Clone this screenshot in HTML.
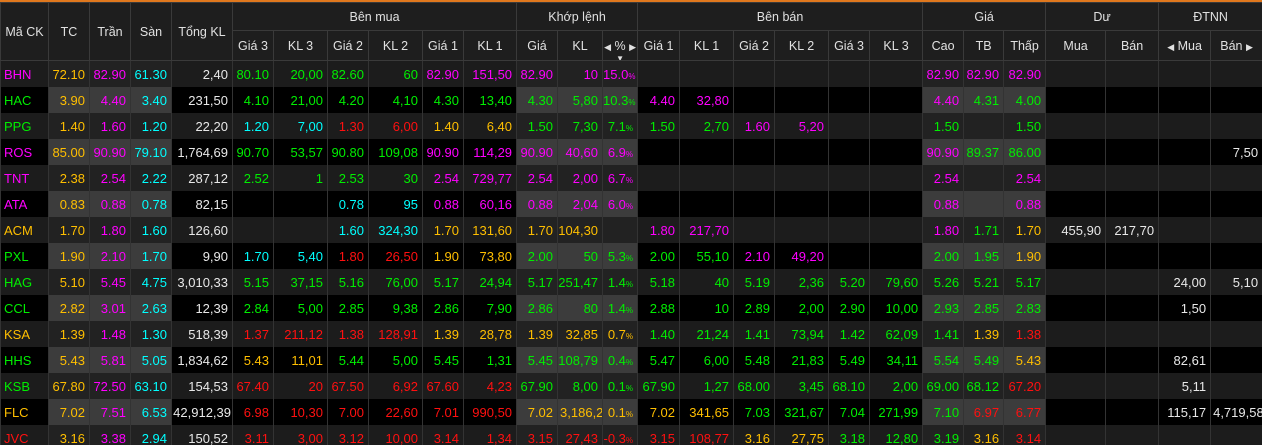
<!DOCTYPE html>
<html><head><meta charset="utf-8">
<style>
html,body{margin:0;padding:0;background:#1c1c1c;width:1262px;height:445px;overflow:hidden}
body{border-top:2px solid #e0781e;box-sizing:border-box;font-family:"Liberation Sans",Arial,sans-serif}
table{border-collapse:collapse;table-layout:fixed;width:1262px}
td,th{padding:0;white-space:nowrap;overflow:hidden;font-weight:normal}
th{color:#e0e0e0;font-size:12.5px;background:#1e1e1e;border:1px solid #3a3a3a;text-align:center}
tr.h1 th{height:27px}
tr.h2 th{height:29px}
td{height:26px;font-size:13px;text-align:right;padding-right:4px;border-left:1px solid #333;border-right:1px solid #333}
tr.o td{background:#1c1c1c}
tr.e td{background:#000}
tr.e td.k{background:#3c3c3c}
tr.o td.k{background:#222}
td.s{text-align:left;padding-left:3px;padding-right:0}
.m{color:#ff00ff}.y{color:#ffbf00}.c{color:#00ffff}.g{color:#00ee00}.r{color:#ff1010}.w{color:#e8e8e8}
small{font-size:8px}
.ar{font-size:9px}
.pc{position:relative}
.pc i{position:absolute;left:0;right:0;bottom:-3px;font-style:normal;font-size:8px;line-height:8px}
</style></head><body>
<table>
<colgroup>
<col style="width:48px"><col style="width:41px"><col style="width:41px"><col style="width:41px"><col style="width:61px">
<col style="width:41px"><col style="width:54px"><col style="width:41px"><col style="width:54px"><col style="width:41px"><col style="width:53px">
<col style="width:41px"><col style="width:45px"><col style="width:35px">
<col style="width:42px"><col style="width:54px"><col style="width:41px"><col style="width:54px"><col style="width:41px"><col style="width:53px">
<col style="width:41px"><col style="width:40px"><col style="width:42px">
<col style="width:60px"><col style="width:53px"><col style="width:52px"><col style="width:52px">
</colgroup>
<tr class="h1"><th rowspan="2">Mã CK</th><th rowspan="2">TC</th><th rowspan="2">Trần</th><th rowspan="2">Sàn</th><th rowspan="2">Tổng KL</th>
<th colspan="6">Bên mua</th><th colspan="3">Khớp lệnh</th><th colspan="6">Bên bán</th><th colspan="3">Giá</th><th colspan="2">Dư</th><th colspan="2">ĐTNN</th></tr>
<tr class="h2"><th>Giá 3</th><th>KL 3</th><th>Giá 2</th><th>KL 2</th><th>Giá 1</th><th>KL 1</th><th>Giá</th><th>KL</th><th class="pc"><span class="ar">◀</span> % <span class="ar">▶</span><i>▼</i></th>
<th>Giá 1</th><th>KL 1</th><th>Giá 2</th><th>KL 2</th><th>Giá 3</th><th>KL 3</th><th>Cao</th><th>TB</th><th>Thấp</th><th>Mua</th><th>Bán</th><th><span class="ar">◀</span> Mua</th><th>Bán <span class="ar">▶</span></th></tr>

<tr class="o"><td class="s m">BHN</td><td class="k y">72.10</td><td class="k m">82.90</td><td class="k c">61.30</td><td class="w">2,40</td><td class="g">80.10</td><td class="g">20,00</td><td class="g">82.60</td><td class="g">60</td><td class="m">82.90</td><td class="m">151,50</td><td class="k m">82.90</td><td class="k m">10</td><td class="k m">15.0<small>%</small></td><td></td><td></td><td></td><td></td><td></td><td></td><td class="k m">82.90</td><td class="k m">82.90</td><td class="k m">82.90</td><td></td><td></td><td></td><td></td></tr>
<tr class="e"><td class="s g">HAC</td><td class="k y">3.90</td><td class="k m">4.40</td><td class="k c">3.40</td><td class="w">231,50</td><td class="g">4.10</td><td class="g">21,00</td><td class="g">4.20</td><td class="g">4,10</td><td class="g">4.30</td><td class="g">13,40</td><td class="k g">4.30</td><td class="k g">5,80</td><td class="k g">10.3<small>%</small></td><td class="m">4.40</td><td class="m">32,80</td><td></td><td></td><td></td><td></td><td class="k m">4.40</td><td class="k g">4.31</td><td class="k g">4.00</td><td></td><td></td><td></td><td></td></tr>
<tr class="o"><td class="s g">PPG</td><td class="k y">1.40</td><td class="k m">1.60</td><td class="k c">1.20</td><td class="w">22,20</td><td class="c">1.20</td><td class="c">7,00</td><td class="r">1.30</td><td class="r">6,00</td><td class="y">1.40</td><td class="y">6,40</td><td class="k g">1.50</td><td class="k g">7,30</td><td class="k g">7.1<small>%</small></td><td class="g">1.50</td><td class="g">2,70</td><td class="m">1.60</td><td class="m">5,20</td><td></td><td></td><td class="k g">1.50</td><td class="k"></td><td class="k g">1.50</td><td></td><td></td><td></td><td></td></tr>
<tr class="e"><td class="s m">ROS</td><td class="k y">85.00</td><td class="k m">90.90</td><td class="k c">79.10</td><td class="w">1,764,69</td><td class="g">90.70</td><td class="g">53,57</td><td class="g">90.80</td><td class="g">109,08</td><td class="m">90.90</td><td class="m">114,29</td><td class="k m">90.90</td><td class="k m">40,60</td><td class="k m">6.9<small>%</small></td><td></td><td></td><td></td><td></td><td></td><td></td><td class="k m">90.90</td><td class="k g">89.37</td><td class="k g">86.00</td><td></td><td></td><td></td><td class="w">7,50</td></tr>
<tr class="o"><td class="s m">TNT</td><td class="k y">2.38</td><td class="k m">2.54</td><td class="k c">2.22</td><td class="w">287,12</td><td class="g">2.52</td><td class="g">1</td><td class="g">2.53</td><td class="g">30</td><td class="m">2.54</td><td class="m">729,77</td><td class="k m">2.54</td><td class="k m">2,00</td><td class="k m">6.7<small>%</small></td><td></td><td></td><td></td><td></td><td></td><td></td><td class="k m">2.54</td><td class="k"></td><td class="k m">2.54</td><td></td><td></td><td></td><td></td></tr>
<tr class="e"><td class="s m">ATA</td><td class="k y">0.83</td><td class="k m">0.88</td><td class="k c">0.78</td><td class="w">82,15</td><td></td><td></td><td class="c">0.78</td><td class="c">95</td><td class="m">0.88</td><td class="m">60,16</td><td class="k m">0.88</td><td class="k m">2,04</td><td class="k m">6.0<small>%</small></td><td></td><td></td><td></td><td></td><td></td><td></td><td class="k m">0.88</td><td class="k"></td><td class="k m">0.88</td><td></td><td></td><td></td><td></td></tr>
<tr class="o"><td class="s y">ACM</td><td class="k y">1.70</td><td class="k m">1.80</td><td class="k c">1.60</td><td class="w">126,60</td><td></td><td></td><td class="c">1.60</td><td class="c">324,30</td><td class="y">1.70</td><td class="y">131,60</td><td class="k y">1.70</td><td class="k y">104,30</td><td class="k"></td><td class="m">1.80</td><td class="m">217,70</td><td></td><td></td><td></td><td></td><td class="k m">1.80</td><td class="k g">1.71</td><td class="k y">1.70</td><td class="w">455,90</td><td class="w">217,70</td><td></td><td></td></tr>
<tr class="e"><td class="s g">PXL</td><td class="k y">1.90</td><td class="k m">2.10</td><td class="k c">1.70</td><td class="w">9,90</td><td class="c">1.70</td><td class="c">5,40</td><td class="r">1.80</td><td class="r">26,50</td><td class="y">1.90</td><td class="y">73,80</td><td class="k g">2.00</td><td class="k g">50</td><td class="k g">5.3<small>%</small></td><td class="g">2.00</td><td class="g">55,10</td><td class="m">2.10</td><td class="m">49,20</td><td></td><td></td><td class="k g">2.00</td><td class="k g">1.95</td><td class="k y">1.90</td><td></td><td></td><td></td><td></td></tr>
<tr class="o"><td class="s g">HAG</td><td class="k y">5.10</td><td class="k m">5.45</td><td class="k c">4.75</td><td class="w">3,010,33</td><td class="g">5.15</td><td class="g">37,15</td><td class="g">5.16</td><td class="g">76,00</td><td class="g">5.17</td><td class="g">24,94</td><td class="k g">5.17</td><td class="k g">251,47</td><td class="k g">1.4<small>%</small></td><td class="g">5.18</td><td class="g">40</td><td class="g">5.19</td><td class="g">2,36</td><td class="g">5.20</td><td class="g">79,60</td><td class="k g">5.26</td><td class="k g">5.21</td><td class="k g">5.17</td><td></td><td></td><td class="w">24,00</td><td class="w">5,10</td></tr>
<tr class="e"><td class="s g">CCL</td><td class="k y">2.82</td><td class="k m">3.01</td><td class="k c">2.63</td><td class="w">12,39</td><td class="g">2.84</td><td class="g">5,00</td><td class="g">2.85</td><td class="g">9,38</td><td class="g">2.86</td><td class="g">7,90</td><td class="k g">2.86</td><td class="k g">80</td><td class="k g">1.4<small>%</small></td><td class="g">2.88</td><td class="g">10</td><td class="g">2.89</td><td class="g">2,00</td><td class="g">2.90</td><td class="g">10,00</td><td class="k g">2.93</td><td class="k g">2.85</td><td class="k g">2.83</td><td></td><td></td><td class="w">1,50</td><td></td></tr>
<tr class="o"><td class="s y">KSA</td><td class="k y">1.39</td><td class="k m">1.48</td><td class="k c">1.30</td><td class="w">518,39</td><td class="r">1.37</td><td class="r">211,12</td><td class="r">1.38</td><td class="r">128,91</td><td class="y">1.39</td><td class="y">28,78</td><td class="k y">1.39</td><td class="k y">32,85</td><td class="k y">0.7<small>%</small></td><td class="g">1.40</td><td class="g">21,24</td><td class="g">1.41</td><td class="g">73,94</td><td class="g">1.42</td><td class="g">62,09</td><td class="k g">1.41</td><td class="k y">1.39</td><td class="k r">1.38</td><td></td><td></td><td></td><td></td></tr>
<tr class="e"><td class="s g">HHS</td><td class="k y">5.43</td><td class="k m">5.81</td><td class="k c">5.05</td><td class="w">1,834,62</td><td class="y">5.43</td><td class="y">11,01</td><td class="g">5.44</td><td class="g">5,00</td><td class="g">5.45</td><td class="g">1,31</td><td class="k g">5.45</td><td class="k g">108,79</td><td class="k g">0.4<small>%</small></td><td class="g">5.47</td><td class="g">6,00</td><td class="g">5.48</td><td class="g">21,83</td><td class="g">5.49</td><td class="g">34,11</td><td class="k g">5.54</td><td class="k g">5.49</td><td class="k y">5.43</td><td></td><td></td><td class="w">82,61</td><td></td></tr>
<tr class="o"><td class="s g">KSB</td><td class="k y">67.80</td><td class="k m">72.50</td><td class="k c">63.10</td><td class="w">154,53</td><td class="r">67.40</td><td class="r">20</td><td class="r">67.50</td><td class="r">6,92</td><td class="r">67.60</td><td class="r">4,23</td><td class="k g">67.90</td><td class="k g">8,00</td><td class="k g">0.1<small>%</small></td><td class="g">67.90</td><td class="g">1,27</td><td class="g">68.00</td><td class="g">3,45</td><td class="g">68.10</td><td class="g">2,00</td><td class="k g">69.00</td><td class="k g">68.12</td><td class="k r">67.20</td><td></td><td></td><td class="w">5,11</td><td></td></tr>
<tr class="e"><td class="s y">FLC</td><td class="k y">7.02</td><td class="k m">7.51</td><td class="k c">6.53</td><td class="w" style="padding-right:1px">42,912,39</td><td class="r">6.98</td><td class="r">10,30</td><td class="r">7.00</td><td class="r">22,60</td><td class="r">7.01</td><td class="r">990,50</td><td class="k y">7.02</td><td class="k y" style="text-align:left;padding-left:2px">3,186,2</td><td class="k y">0.1<small>%</small></td><td class="y">7.02</td><td class="y">341,65</td><td class="g">7.03</td><td class="g">321,67</td><td class="g">7.04</td><td class="g">271,99</td><td class="k g">7.10</td><td class="k r">6.97</td><td class="k r">6.77</td><td></td><td></td><td class="w">115,17</td><td class="w" style="text-align:left;padding-left:2px">4,719,58</td></tr>
<tr class="o"><td class="s r">JVC</td><td class="k y">3.16</td><td class="k m">3.38</td><td class="k c">2.94</td><td class="w">150,52</td><td class="r">3.11</td><td class="r">3,00</td><td class="r">3.12</td><td class="r">10,00</td><td class="r">3.14</td><td class="r">1,34</td><td class="k r">3.15</td><td class="k r">27,43</td><td class="k r">-0.3<small>%</small></td><td class="r">3.15</td><td class="r">108,77</td><td class="y">3.16</td><td class="y">27,75</td><td class="g">3.18</td><td class="g">12,80</td><td class="k g">3.19</td><td class="k y">3.16</td><td class="k r">3.14</td><td></td><td></td><td></td><td></td></tr>
</table>
</body></html>
